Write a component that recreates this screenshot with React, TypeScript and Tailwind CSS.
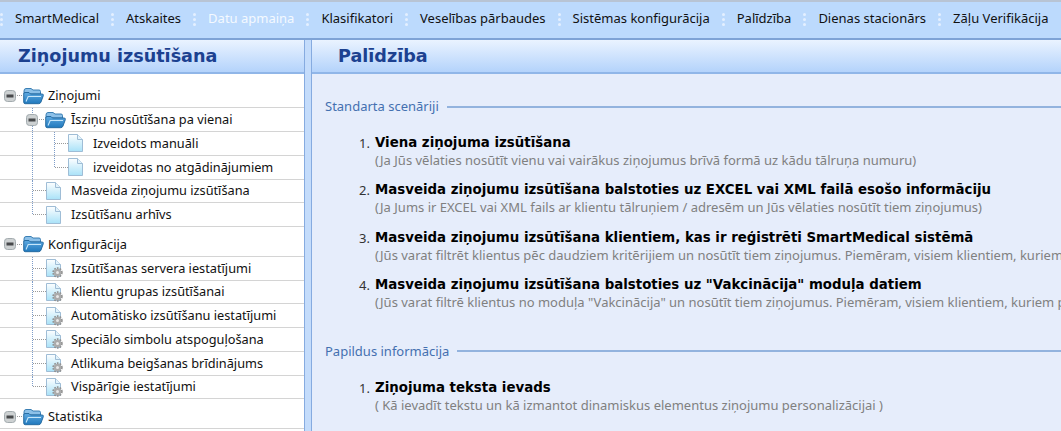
import React from 'react';

const menu = [
  'SmartMedical',
  'Atskaites',
  'Datu apmaiņa',
  'Klasifikatori',
  'Veselības pārbaudes',
  'Sistēmas konfigurācija',
  'Palīdzība',
  'Dienas stacionārs',
  'Zāļu Verifikācija',
];

const Separator = () => (
  <span className="flex w-[3px] flex-col gap-[2px]">
    <span className="h-[3px] w-[3px] rounded-full bg-[#e4f0ff]" />
    <span className="h-[3px] w-[3px] rounded-full bg-[#e4f0ff]" />
    <span className="h-[3px] w-[3px] rounded-full bg-[#e4f0ff]" />
  </span>
);

const Toggle = () => (
  <svg width="12" height="12" viewBox="0 0 12 12" className="relative shrink-0">
    <rect x="0.5" y="0.5" width="11" height="11" rx="3" fill="#cdd1d2" stroke="#a3abae" />
    <rect x="2.5" y="4.5" width="7" height="3" fill="#47494b" />
  </svg>
);

const FolderIcon = () => (
  <svg width="21" height="18" viewBox="0 0 21 18" className="shrink-0">
    <defs>
      <linearGradient id="folderFill" x1="0" y1="0" x2="0" y2="1">
        <stop offset="0" stopColor="#5fa9e0" />
        <stop offset="1" stopColor="#1f78bd" />
      </linearGradient>
    </defs>
    <path d="M1 4 Q1 1.5 3 1.5 H8 L10 3 H16 Q17.5 3 17.5 4.5 V7 H1 Z" fill="#8cc0e8" stroke="#2a74ad" strokeWidth="0.9" />
    <path d="M0.7 15 V7 Q0.7 5.5 2 5.5 H6 L7.5 7 H19 Q20.8 7 20.3 8.7 L18 15 Q17.4 16.7 15.6 16.7 H2.2 Q0.7 16.7 0.7 15 Z" fill="url(#folderFill)" stroke="#1f659c" strokeWidth="0.9" />
    <path d="M3 14.5 L5.2 9.5 H18" fill="none" stroke="#c6e6fa" strokeWidth="1.1" />
  </svg>
);

const DocIcon = ({ gear }: { gear?: boolean }) => (
  <svg width="15" height="18" viewBox="0 0 15 18" className="shrink-0 overflow-visible">
    <defs>
      <linearGradient id="docFill" x1="0" y1="0" x2="0" y2="1">
        <stop offset="0" stopColor="#fdfeff" />
        <stop offset="1" stopColor="#a9e2f8" />
      </linearGradient>
    </defs>
    <path d="M0.5 0.5 H9.5 L14.5 5.5 V17.5 H0.5 Z" fill="url(#docFill)" stroke="#9fbdd6" />
    <path d="M9.5 0.5 V5.5 H14.5" fill="#e3f3fb" stroke="#9fbdd6" />
    {gear && (
      <g>
        <circle cx="11.5" cy="13.5" r="4.4" fill="none" stroke="#8e8e8e" strokeWidth="1.6" strokeDasharray="1.7 1.1" />
        <circle cx="11.5" cy="13.5" r="3.8" fill="#ababab" />
        <circle cx="11.5" cy="13.5" r="1.5" fill="#e8e8e8" />
      </g>
    )}
  </svg>
);

type TreeRow = {
  label: string;
  level: number;
  kind: 'group' | 'folder' | 'doc' | 'gear';
  last?: boolean;
};

const groups: TreeRow[][] = [
  [
    { label: 'Ziņojumi', level: 0, kind: 'group' },
    { label: 'Īsziņu nosūtīšana pa vienai', level: 1, kind: 'folder' },
    { label: 'Izveidots manuāli', level: 2, kind: 'doc' },
    { label: 'izveidotas no atgādinājumiem', level: 2, kind: 'doc', last: true },
    { label: 'Masveida ziņojumu izsūtīšana', level: 1, kind: 'doc' },
    { label: 'Izsūtīšanu arhīvs', level: 1, kind: 'doc', last: true },
  ],
  [
    { label: 'Konfigurācija', level: 0, kind: 'group' },
    { label: 'Izsūtīšanas servera iestatījumi', level: 1, kind: 'gear' },
    { label: 'Klientu grupas izsūtīšanai', level: 1, kind: 'gear' },
    { label: 'Automātisko izsūtīšanu iestatījumi', level: 1, kind: 'gear' },
    { label: 'Speciālo simbolu atspoguļošana', level: 1, kind: 'gear' },
    { label: 'Atlikuma beigšanas brīdinājums', level: 1, kind: 'gear' },
    { label: 'Vispārīgie iestatījumi', level: 1, kind: 'gear', last: true },
  ],
  [{ label: 'Statistika', level: 0, kind: 'group' }],
];

const Row = ({ row }: { row: TreeRow }) => {
  const isDoc = row.kind === 'doc' || row.kind === 'gear';

  return (
    <div className="flex h-[23.75px] items-center border-b border-[#d4d4d4] text-[12.75px] text-[#111]">
      {row.level === 0 && (
        <div className="flex items-center pl-[4px]">
          <Toggle />
          <span className="mx-[1px] w-[5px] border-t border-dotted border-[#9a9a9a]" />
          <FolderIcon />
          <span className="ml-[4px]">{row.label}</span>
        </div>
      )}
      {row.kind === 'folder' && (
        <div className="relative flex h-full items-center pl-[26px]">
          <span className="absolute top-0 left-[32px] h-full border-l border-dotted border-[#7d9cc8]" />
          <Toggle />
          <span className="mx-[1px] w-[5px] border-t border-dotted border-[#9a9a9a]" />
          <FolderIcon />
          <span className="ml-[5px]">{row.label}</span>
        </div>
      )}
      {isDoc && (
        <div className="flex h-full items-center pl-[32px]">
          {row.level === 2 && (
            <div className="h-full w-[22px] shrink-0 border-l border-dotted border-[#7d9cc8]" />
          )}
          <div className="relative flex h-full w-[14px] shrink-0 items-center border-l border-dotted border-[#7d9cc8]">
            <span className="w-[14px] border-t border-dotted border-[#9a9a9a]" />
            {row.last && <span className="absolute bottom-0 -left-px h-[11px] w-px bg-white" />}
          </div>
          <DocIcon gear={row.kind === 'gear'} />
          <span className="ml-[10px] whitespace-nowrap">{row.label}</span>
        </div>
      )}
    </div>
  );
};

const PanelTitle = ({ children, className }: { children: React.ReactNode; className: string }) => (
  <div
    className={`flex h-[34px] items-center border-b-2 border-[#90b6e8] bg-gradient-to-b from-[#eaf3ff] to-[#b4d3fb] text-[17.6px] font-bold text-[#1c4190] ${className}`}
    style={{ fontFamily: '"DejaVu Sans", sans-serif' }}
  >
    {children}
  </div>
);

const Section = ({ title, children }: { title: string; children: React.ReactNode }) => (
  <div>
    <div className="flex items-center pl-[13px]">
      <span className="whitespace-nowrap text-[#4470b0]">{title}</span>
      <span className="ml-[8px] h-[2px] flex-1 bg-[#93b3de]" />
    </div>
    {children}
  </div>
);

const Scenario = ({ n, title, note }: { n: number; title: string; note: string }) => (
  <div className="flex h-[47.5px] pl-[47px] whitespace-nowrap">
    <span className="w-[16px] shrink-0 leading-[18px] text-[#333]">{n}.</span>
    <div>
      <div
        className="text-[13.35px] leading-[18px] font-bold text-black"
        style={{ fontFamily: '"DejaVu Sans", sans-serif' }}
      >
        {title}
      </div>
      <div className="leading-[17.5px] text-[#808080]">{note}</div>
    </div>
  </div>
);

export default function App() {
  return (
    <div
      className="flex h-[431px] w-[1061px] flex-col overflow-hidden bg-white text-[13px]"
      style={{ fontFamily: '"Noto Sans", Tahoma, sans-serif' }}
    >
      <div className="flex h-[40px] shrink-0 items-center border-t-2 border-b-2 border-t-[#b8c4d4] border-b-[#7ea3d6] bg-[#bcdafd] pb-[2px] whitespace-nowrap">
        <Separator />
        {menu.map((item, i) => (
          <React.Fragment key={item}>
            <span className={`px-[12px] ${item === 'Datu apmaiņa' ? 'text-[#f4f9ff]' : 'text-[#111]'}`}>{item}</span>
            {i < menu.length - 1 && <Separator />}
          </React.Fragment>
        ))}
      </div>

      <div className="flex min-h-0 flex-1">
        <div className="flex w-[304px] shrink-0 flex-col">
          <PanelTitle className="pl-[18px]">Ziņojumu izsūtīšana</PanelTitle>
          <div className="pt-[10.5px]">
            {groups.map((group, i) => (
              <div key={i} className={i > 0 ? 'mt-[6px]' : ''}>
                {group.map(row => (
                  <Row key={row.label} row={row} />
                ))}
              </div>
            ))}
          </div>
        </div>

        <div className="w-[8px] shrink-0 border-x border-[#86abe0] bg-[#c4dcfb]" />

        <div className="flex min-w-0 flex-1 flex-col bg-[#e6edfb]">
          <PanelTitle className="pl-[26px]">Palīdzība</PanelTitle>
          <div className="overflow-hidden pt-[23px]">
            <Section title="Standarta scenāriji">
              <div className="pt-[17px]">
                <Scenario
                  n={1}
                  title="Viena ziņojuma izsūtīšana"
                  note="(Ja Jūs vēlaties nosūtīt vienu vai vairākus ziņojumus brīvā formā uz kādu tālruņa numuru)"
                />
                <Scenario
                  n={2}
                  title="Masveida ziņojumu izsūtīšana balstoties uz EXCEL vai XML failā esošo informāciju"
                  note="(Ja Jums ir EXCEL vai XML fails ar klientu tālruņiem / adresēm un Jūs vēlaties nosūtīt tiem ziņojumus)"
                />
                <Scenario
                  n={3}
                  title="Masveida ziņojumu izsūtīšana klientiem, kas ir reģistrēti SmartMedical sistēmā"
                  note="(Jūs varat filtrēt klientus pēc daudziem kritērijiem un nosūtīt tiem ziņojumus. Piemēram, visiem klientiem, kuriem šodien ir dzimšanas diena)"
                />
                <Scenario
                  n={4}
                  title='Masveida ziņojumu izsūtīšana balstoties uz "Vakcinācija" moduļa datiem'
                  note='(Jūs varat filtrē klientus no moduļa "Vakcinācija" un nosūtīt tiem ziņojumus. Piemēram, visiem klientiem, kuriem pienākusi vakcinācija)'
                />
              </div>
            </Section>
            <div className="pt-[18px]">
              <Section title="Papildus informācija">
                <div className="pt-[18px]">
                  <Scenario
                    n={1}
                    title="Ziņojuma teksta ievads"
                    note="( Kā ievadīt tekstu un kā izmantot dinamiskus elementus ziņojumu personalizācijai )"
                  />
                </div>
              </Section>
            </div>
          </div>
        </div>
      </div>
    </div>
  );
}
